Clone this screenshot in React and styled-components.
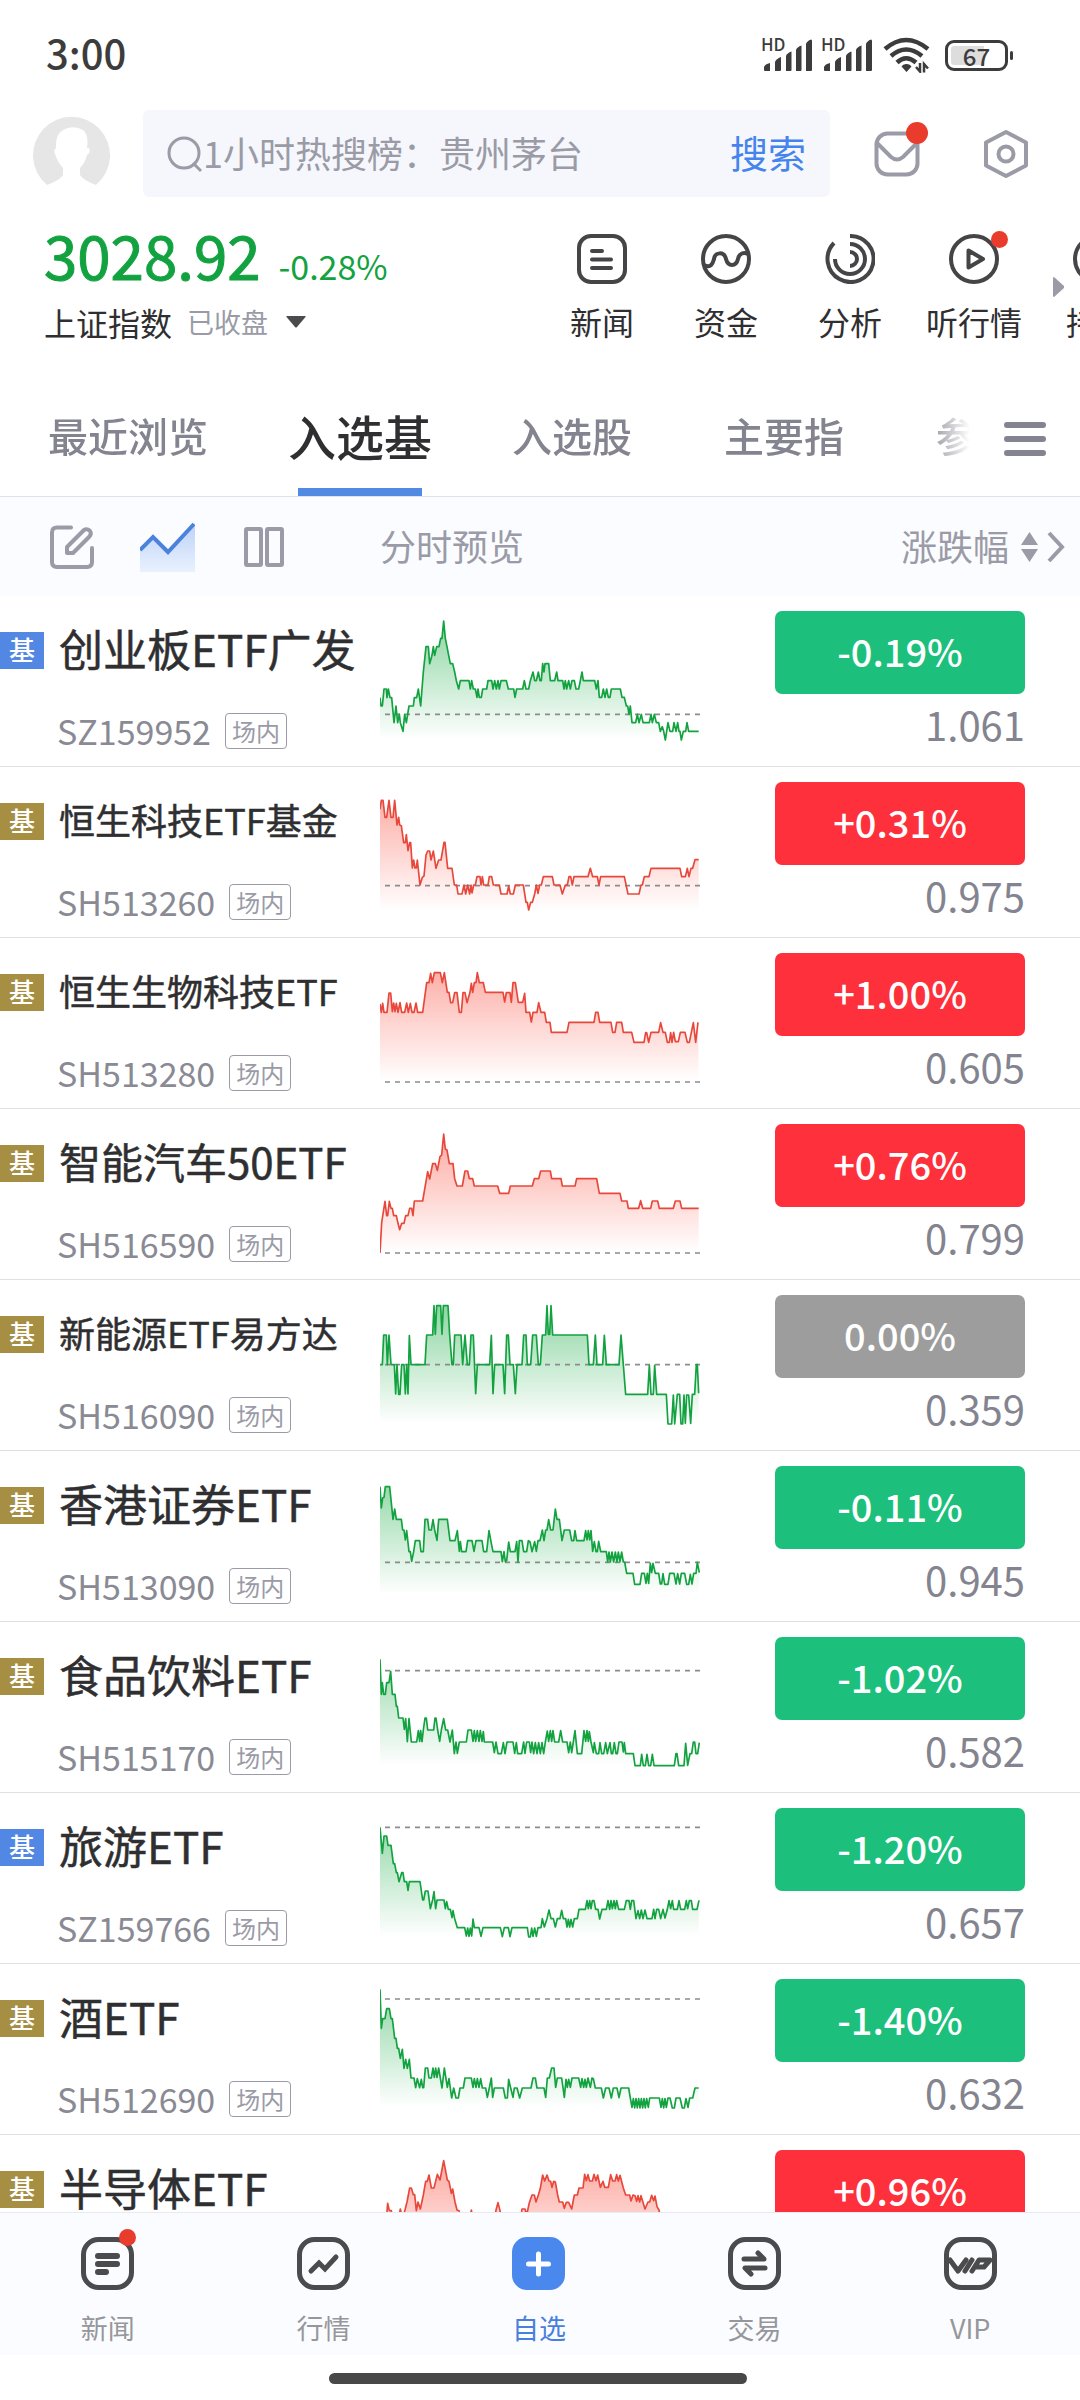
import React from "react";
import styled, { createGlobalStyle, css } from "styled-components";

const GlobalStyle = createGlobalStyle`
  * { box-sizing: border-box; }
  body {
    margin: 0;
    background: #ffffff;
    color: #2f2f31;
    font-family: "Noto Sans CJK SC", "Noto Sans", sans-serif;
  }
  button, input {
    font: inherit;
    color: inherit;
    border: 0;
    margin: 0;
    padding: 0;
    background: none;
    border-radius: 0;
    outline: 0;
  }
  button { cursor: pointer; }
  ul { list-style: none; margin: 0; padding: 0; }
  svg { display: block; flex: none; }
`;

const GREEN = "#12a240";
const RED = "#e8483b";
const MUTED = "#9a9ba6";

const Screen = styled.div`
  height: 100vh;
  display: flex;
  flex-direction: column;
  overflow: hidden;
`;

/* ---------- status bar ---------- */

const StatusBar = styled.div`
  flex: none;
  height: 110px;
  padding: 0 65px 0 46px;
  display: flex;
  align-items: center;
  justify-content: space-between;
  color: #3c3c3c;
`;

const Clock = styled.time`
  padding-bottom: 6px;
  font-size: 40px;
  line-height: 48px;
  font-weight: 500;
`;

const StatusIcons = styled.div`
  display: flex;
  align-items: center;
  gap: 10px;
`;

const Signal = styled.div`
  display: flex;
  align-items: flex-start;
  width: 50px;
  height: 34px;
  position: relative;
`;

const HdMark = styled.span`
  position: absolute;
  left: -1px;
  top: -1px;
  font-size: 17px;
  line-height: 14px;
  font-weight: 500;
`;

const Battery = styled.div`
  position: relative;
  width: 63px;
  height: 31px;
  margin: 0 7px 0 4px;
  border: 3px solid #3c3c3c;
  border-radius: 9px;
  font-size: 24px;
  line-height: 19px;
  font-weight: 500;
  text-align: center;
  background: linear-gradient(90deg, #dddddd 64%, #ffffff 64%) content-box;
  padding: 3px;
  display: flex;
  align-items: center;
  justify-content: center;

  &::after {
    content: "";
    position: absolute;
    right: -8px;
    top: 8px;
    width: 3px;
    height: 9px;
    border-radius: 2px;
    background: #3c3c3c;
  }
`;

/* ---------- header ---------- */

const Header = styled.header`
  flex: none;
  height: 87px;
  padding: 0 50px 0 33px;
  display: flex;
  align-items: center;
`;

const RoundButton = styled.button`
  width: 77px;
  height: 77px;
  margin-right: 33px;
`;

const SearchForm = styled.form`
  flex: 1;
  min-width: 0;
  height: 87px;
  margin-right: 43px;
  padding: 0 24px;
  border-radius: 6px;
  background: #f5f7fc;
  display: flex;
  align-items: center;
`;

const SearchInput = styled.input`
  flex: 1;
  min-width: 0;
  height: 54px;
  padding-bottom: 4px;
  font-size: 36px;
  &::placeholder { color: ${MUTED}; opacity: 1; }
`;

const SearchButton = styled.button`
  padding-bottom: 4px;
  font-size: 38px;
  line-height: 54px;
  color: #4484ec;
`;

const HeaderButton = styled.button`
  position: relative;
  width: 48px;
  height: 54px;
  display: grid;
  place-items: center;
  & + & { margin-left: 61px; }
`;

const Dot = styled.i`
  position: absolute;
  border-radius: 50%;
  background: #e93c2c;
  width: ${(p) => p.$size}px;
  height: ${(p) => p.$size}px;
  right: ${(p) => p.$right}px;
  top: ${(p) => p.$top}px;
`;

/* ---------- index summary ---------- */

const Summary = styled.section`
  flex: none;
  position: relative;
  height: 188px;
  padding-top: 22px;
  display: flex;
`;

const IndexBlock = styled.div`
  width: 50%;
  flex: none;
  padding-left: 44px;
`;

const IndexFigures = styled.div`
  display: flex;
  align-items: baseline;
  gap: 18px;
  height: 80px;
  line-height: 70px;
  color: ${GREEN};
`;

const IndexValue = styled.strong`
  font-size: 60px;
  font-weight: 400;
  -webkit-text-stroke: 1px ${GREEN};
`;

const IndexChange = styled.span`
  font-size: 34px;
`;

const IndexPicker = styled.button`
  display: flex;
  align-items: center;
  height: 46px;
  font-size: 32px;
  line-height: 46px;
`;

const MarketState = styled.span`
  margin: 0 18px 0 15px;
  font-size: 27px;
  color: ${MUTED};
`;

const Shortcuts = styled.nav`
  flex: 1;
  min-width: 0;
  display: flex;
  overflow: hidden;
`;

const Shortcut = styled.a`
  position: relative;
  flex: none;
  width: 124px;
  padding-top: 15px;
  display: flex;
  flex-direction: column;
  align-items: center;
  gap: 14px;
  color: inherit;
  text-decoration: none;
  white-space: nowrap;
  font-size: 32px;
  line-height: 46px;
`;

const MoreArrow = styled.svg`
  position: absolute;
  right: 16px;
  top: 80px;
`;

/* ---------- group tabs ---------- */

const TabBar = styled.div`
  flex: none;
  height: 112px;
  padding: 0 34px 0 2px;
  border-bottom: 1px solid #e1e2e6;
  display: flex;
  align-items: stretch;
`;

const TabList = styled.div`
  flex: 1;
  min-width: 0;
  display: flex;
  overflow: hidden;
  mask-image: linear-gradient(90deg, #000 calc(100% - 80px), transparent calc(100% - 34px));
`;

const Tab = styled.button`
  position: relative;
  flex: none;
  padding: 0 46px;
  height: 111px;
  white-space: nowrap;
  font-size: 40px;
  font-weight: 500;
  line-height: 100px;
  color: #83848f;
  display: flex;
  ${(p) =>
    p.$active &&
    css`
      padding: 0 34px;
      font-size: 48px;
      color: #2f2f31;
      &::after {
        content: "";
        position: absolute;
        left: 44px;
        right: 44px;
        bottom: 0;
        height: 8px;
        background: #5289e2;
      }
    `}
`;

const MenuButton = styled.button`
  width: 42px;
  margin-bottom: 4px;
  display: grid;
  place-items: center;
`;

/* ---------- fund table ---------- */

const ListArea = styled.main`
  flex: 1;
  min-height: 0;
  overflow: hidden;
`;

const Table = styled.table`
  width: 100%;
  table-layout: fixed;
  border-collapse: separate;
  border-spacing: 0;
`;

const HeadCell = styled.th`
  height: 99px;
  padding: 0;
  width: ${(p) => p.$width || "auto"};
  background: #fbfcff;
  font-size: 36px;
  line-height: 52px;
  font-weight: 400;
  color: ${MUTED};
  text-align: left;
`;

const HeadLabel = styled.span`
  display: block;
  padding-bottom: 4px;
`;

const Tools = styled.div`
  display: flex;
  align-items: center;
  padding-left: 50px;
  & > :nth-child(2) { margin: 0 49px 0 46px; }
`;

const SortButton = styled.button`
  width: 100%;
  padding-right: 15px;
  display: flex;
  align-items: center;
  justify-content: flex-end;
  gap: 10px;
`;

const Cell = styled.td`
  height: 171px;
  padding: 0;
  vertical-align: top;
  border-bottom: 1px solid #dfe0e3;
`;

const NameLine = styled.div`
  display: flex;
  align-items: center;
  gap: 15px;
  height: 54px;
  margin-top: 27px;
`;

const Badge = styled.span`
  flex: none;
  width: 44px;
  height: 37px;
  padding-left: 9px;
  font-size: 26px;
  line-height: 34px;
  font-weight: 500;
  color: #ffffff;
  background: ${(p) => (p.$market === "SZ" ? "#5288e4" : "#a68e42")};
`;

const FundName = styled.span`
  padding-bottom: 4px;
  white-space: nowrap;
  font-weight: 400;
  -webkit-text-stroke: 0.5px #2f2f31;
  line-height: 54px;
  font-size: ${(p) => p.$size}px;
`;

const CodeLine = styled.div`
  display: flex;
  align-items: center;
  gap: 14px;
  height: 36px;
  margin-top: 36px;
  padding-left: 57px;
  font-size: 34px;
  line-height: 36px;
  color: #898a94;
`;

const Tag = styled.span`
  padding: 0 6px;
  height: 36px;
  border: 1px solid ${MUTED};
  border-radius: 4px;
  font-size: 24px;
  line-height: 33px;
  color: ${MUTED};
`;

const Quote = styled.div`
  margin: 15px 55px 0 0;
  display: flex;
  flex-direction: column;
  align-items: flex-end;
`;

const fills = { up: "#fd303b", down: "#1cc07c", flat: "#9d9d9d" };

const ChangeButton = styled.button`
  width: 250px;
  height: 83px;
  padding-bottom: 4px;
  border-radius: 7px;
  background: ${(p) => fills[p.$trend]};
  color: #ffffff;
  font-size: 38px;
  font-weight: 500;
  line-height: 76px;
`;

const Price = styled.span`
  margin-top: 10px;
  font-size: 40px;
  line-height: 40px;
  color: #83848f;
`;

/* ---------- bottom navigation ---------- */

const BottomNav = styled.nav`
  flex: none;
  height: 143px;
  padding-right: 2px;
  border-top: 1px solid #e9ebf0;
  background: #fbfcff;
  display: flex;
`;

const NavItem = styled.a`
  flex: 1;
  padding-top: 24px;
  display: flex;
  flex-direction: column;
  align-items: center;
  gap: 19px;
  text-decoration: none;
  font-size: 27px;
  line-height: 38px;
  color: ${(p) => (p.$active ? "#4a80dd" : "#96979b")};
`;

const IconHolder = styled.span`
  position: relative;
  display: block;
`;

const HomeArea = styled.div`
  flex: none;
  height: 45px;
  display: flex;
  justify-content: center;
  padding: 18px 5px 0 0;
`;

const HomeBar = styled.div`
  width: 418px;
  height: 11px;
  border-radius: 6px;
  background: #484848;
`;

/* ---------- icons ---------- */

const SignalIcon = () => (
  <Signal>
    <HdMark>HD</HdMark>
    <svg width="50" height="34" viewBox="0 0 50 34" fill="#3c3c3c">
      <path d="M2 29 Q3 26 8 25 V33 H3 Q2 33 2 32Z M13 24 Q14 21 19 19 V32 Q19 33 18 33 H13Z M24 18 Q25 15 29.500 13.500 V32 Q29.500 33 28.500 33 H24Z M34 12 Q35 9 39.500 7.500 V32 Q39.500 33 38.500 33 H34Z M44 6 Q45 3 49 1.500 Q50 1.500 50 3 V32 Q50 33 49 33 H44Z" />
    </svg>
  </Signal>
);

const WifiIcon = () => (
  <svg width="49" height="36" viewBox="0 0 49 36" fill="none" stroke="#3c3c3c" strokeWidth="4.500">
    <path d="M3 12 Q24 -6 46 12" />
    <path d="M9 19 Q24 6 40 19" />
    <path d="M15 25.500 Q24 17 34 25.500" />
    <path d="M24.500 27 a5 4 0 0 1 5 2.500 L24.500 35 L19.500 29.500 a5 4 0 0 1 5 -2.500z" fill="#3c3c3c" stroke="none" />
    <path d="M34 30 l4 4.500 V26 M42 35.500 V27 l4 4.500" strokeWidth="2.500" />
  </svg>
);

const AvatarIcon = () => (
  <svg width="77" height="77" viewBox="0 0 77 77">
    <path
      fill="#e6e6e7"
      d="M14 70 A38.500 38.500 0 1 1 63 70 Q50 65 47 60 V53 Q52 48 54 40 Q58 38 56 33 H54 Q56 20 50 15 Q43 11 35 13 Q22 16 23 33 Q20 35 22 39 Q25 48 30 53 V60 Q27 65 14 70Z"
    />
  </svg>
);

const SearchIcon = () => (
  <svg width="36" height="38" viewBox="0 0 36 38" fill="none" stroke={MUTED} strokeWidth="3">
    <circle cx="17" cy="18" r="15" />
    <path d="M26 28 L34 36" />
  </svg>
);

const MailIcon = () => (
  <svg width="46" height="46" viewBox="0 0 46 46" fill="none" stroke={MUTED} strokeWidth="4">
    <rect x="2.500" y="2.500" width="41" height="41" rx="11" />
    <path d="M3 12 L17 26 Q23 31 29 26 L43 12" />
  </svg>
);

const HexIcon = () => (
  <svg width="46" height="50" viewBox="0 0 46 50" fill="none" stroke={MUTED} strokeWidth="4">
    <path d="M23 3 L43 13.500 V36.500 L23 47 L3 36.500 V13.500Z" strokeLinejoin="round" />
    <circle cx="23" cy="25" r="7.500" />
  </svg>
);

const shortcutShapes = {
  news: (
    <>
      <rect x="2" y="2" width="46" height="46" rx="12" />
      <path d="M15 17 H25 M15 25.500 H34 M15 34 H34" strokeLinecap="round" strokeWidth="4" />
    </>
  ),
  fund: (
    <>
      <circle cx="25" cy="25" r="23" />
      <path d="M3 31 C11 35 12 28 13 25 C14 18 23 17 25 25 C27 33 35 33 37 25 C38 19 43 18 47 20" />
    </>
  ),
  analysis: (
    <path d="M25 2 A23 23 0 1 1 9 9 M25 10 A15 15 0 1 1 10 25 M25 18 A7 7 0 0 1 25 32" />
  ),
  listen: (
    <>
      <circle cx="25" cy="25" r="23" />
      <path d="M19.500 16.500 L34 25 L19.500 33.500Z" strokeLinejoin="round" />
    </>
  ),
  hold: <circle cx="25" cy="25" r="23" />,
};

const ShortcutIcon = ({ name }) => (
  <svg width="50" height="50" viewBox="0 0 50 50" fill="none" stroke="#454547" strokeWidth="4">
    {shortcutShapes[name]}
  </svg>
);

const navShapes = {
  news: <path d="M17 19 H36 M17 27 H36 M17 35 H25" strokeWidth="6" />,
  market: <path d="M14 34 L22 26 L28 32 L39 20" />,
  trade: (
    <path
      d="M16 22 H36 L30 16 M37 31 H17 L23 37"
      strokeLinejoin="round"
    />
  ),
  vip: <path d="M6 23 L14 34 L22 23 M28 23 L21 34 M28 34 L35 23 H46 L40 30 H33" strokeWidth="5" strokeLinejoin="round" />,
};

const NavIcon = ({ name }) =>
  name === "watch" ? (
    <svg width="53" height="53" viewBox="0 0 53 53">
      <rect width="53" height="53" rx="15" fill="#4a88ee" />
      <path d="M26.500 17 V37 M16.500 27 H36.500" stroke="#fff" strokeWidth="5" strokeLinecap="round" />
    </svg>
  ) : (
    <svg width="53" height="53" viewBox="0 0 53 53" fill="none" stroke="#4b4b4d" strokeLinecap="round" strokeWidth="5">
      <rect x="2.500" y="2.500" width="48" height="48" rx="15" />
      {navShapes[name]}
    </svg>
  );

const EditIcon = () => (
  <svg width="44" height="44" viewBox="0 0 44 44" fill="none" stroke={MUTED} strokeWidth="4" strokeLinecap="round" strokeLinejoin="round">
    <path d="M21 2.500 H7 Q2 2.500 2 7.500 V37 Q2 42 7 42 H37 Q42 42 42 37 V23" />
    <path d="M17 28 V22 L34 5 Q37 3 40 6 Q42 9 39 12 L23 28Z" />
  </svg>
);

const TrendIcon = () => (
  <svg width="55" height="51" viewBox="0 0 55 51" fill="none">
    <defs>
      <linearGradient id="trendFill" x1="0" y1="0" x2="0" y2="1">
        <stop offset="0" stopColor="#bcd2f7" />
        <stop offset="1" stopColor="#e9f1fe" />
      </linearGradient>
    </defs>
    <path d="M0 30 L13 16 L28 31 L55 2 V51 H0Z" fill="url(#trendFill)" />
    <path d="M0 29 L13 16 L28 31 L54 3" stroke="#4b82dc" strokeWidth="4" />
  </svg>
);

const ColumnsIcon = () => (
  <svg width="40" height="40" viewBox="0 0 40 40" fill="none" stroke={MUTED} strokeWidth="4">
    <rect x="2" y="2" width="15" height="36" rx="1" />
    <rect x="23" y="2" width="15" height="36" rx="1" />
  </svg>
);

/* ---------- data ---------- */

/* Chart traces are "x,y" pairs inside a 960 x 510 window whose top is given by `top`. */
const funds = [
  {
    name: "创业板ETF广发", size: 44, code: "SZ159952", change: "-0.19%", price: "1.061", trend: "down", top: 0, base: 355,
    line: "60,305 63,330 67,330 72,279 79,279 81,305 85,279 90,305 95,305 102,380 108,330 113,380 118,355 121,380 129,406 134,355 139,380 147,330 160,330 163,305 170,305 175,279 182,330 190,228 198,152 205,152 209,203 216,178 220,152 224,178 230,152 237,152 242,127 246,127 251,75 256,127 261,152 266,178 271,203 278,203 284,228 289,254 296,279 301,254 327,254 331,279 335,254 340,279 346,279 351,304 354,279 358,304 364,304 368,279 380,279 384,254 395,254 399,279 404,254 409,279 414,254 418,279 423,254 439,254 445,279 461,279 465,304 470,279 488,279 493,254 498,279 506,279 511,254 519,228 524,254 529,254 535,228 540,254 544,254 548,203 552,228 555,203 566,203 571,254 584,254 590,228 594,254 608,254 612,279 616,254 620,279 626,254 631,279 636,254 643,254 648,279 656,279 661,254 666,228 670,254 704,254 709,279 714,254 718,304 725,304 730,279 735,304 740,279 745,304 750,304 754,279 781,279 786,304 793,304 799,330 803,330 807,355 811,330 816,380 827,380 832,355 837,380 844,355 849,380 868,380 873,355 877,380 883,355 889,380 896,380 901,406 907,392 911,406 916,432 924,380 930,406 938,406 942,380 948,406 953,380 957,406 960,406 964,432 970,406 977,406 981,380 986,406 1016,406",
  },
  {
    name: "恒生科技ETF基金", size: 36, code: "SH513260", change: "+0.31%", price: "0.975", trend: "up", top: 21, base: 377,
    line: "60,147 64,121 69,121 75,172 80,172 87,121 93,172 99,172 104,121 111,195 116,172 119,195 124,197 131,248 136,248 139,224 144,272 149,248 152,248 157,324 161,300 165,324 169,324 172,300 180,375 187,352 192,348 198,285 203,273 209,273 213,300 220,273 228,325 236,300 243,300 252,247 255,247 263,325 276,325 283,375 290,375 294,402 306,402 312,375 317,402 323,375 329,402 333,375 336,399 341,375 346,375 351,350 360,350 363,375 367,350 371,375 384,375 388,350 395,350 400,375 418,375 423,402 441,402 446,378 451,402 460,402 466,375 490,375 498,427 502,427 506,450 512,427 517,427 524,402 529,375 534,400 539,375 544,375 550,350 577,350 582,375 600,375 607,402 616,375 622,375 627,350 632,350 637,375 642,350 684,350 691,325 698,350 712,350 717,375 722,350 793,350 804,402 837,402 843,375 847,375 853,350 867,350 873,325 960,325 965,350 976,350 982,325 987,350 993,325 998,325 1005,299 1016,299",
  },
  {
    name: "恒生生物科技ETF", size: 36, code: "SH513280", change: "+1.00%", price: "0.605", trend: "up", top: 534, base: 966,
    line: "60,732 64,757 68,730 72,757 81,757 87,699 92,699 97,755 101,729 105,755 109,730 114,757 120,728 125,757 134,757 140,729 145,757 151,730 156,757 162,757 168,729 173,757 188,757 200,668 207,668 212,640 217,668 223,638 241,638 247,668 253,638 262,697 267,697 272,728 278,728 284,698 291,698 298,757 304,757 309,698 315,698 321,728 330,697 334,670 338,697 343,668 348,668 352,638 358,668 370,668 376,697 429,697 434,726 439,698 450,698 454,727 459,668 466,668 475,727 488,727 494,700 498,757 509,757 514,786 519,757 531,757 536,728 543,757 554,757 559,787 570,787 574,817 621,817 627,787 702,787 707,757 714,757 719,787 753,787 758,817 765,817 770,787 785,787 790,817 815,817 822,847 852,847 857,818 860,818 866,847 873,817 896,817 902,788 909,817 916,817 922,847 928,847 932,818 936,847 941,817 946,845 955,845 961,817 975,817 982,847 988,847 1000,788 1007,847 1014,787",
  },
  {
    name: "智能汽车50ETF", size: 42, code: "SH516590", change: "+0.76%", price: "0.799", trend: "up", top: 27, base: 459,
    line: "60,459 65,368 75,304 80,347 83,347 88,304 93,325 97,325 101,347 109,347 114,370 119,389 125,370 132,370 137,347 144,347 149,325 155,325 159,347 163,303 188,303 203,215 209,237 218,191 226,191 232,211 240,170 245,165 251,102 256,147 261,150 268,191 279,191 284,236 291,258 307,258 315,213 323,213 328,236 338,236 343,258 413,258 419,280 446,280 451,258 517,258 523,236 536,236 542,213 571,213 575,236 603,236 607,258 645,258 650,236 710,236 718,280 780,280 785,303 801,303 805,325 836,325 842,302 848,325 872,325 877,303 893,303 898,325 940,325 946,303 960,303 965,325 1016,325",
  },
  {
    name: "新能源ETF易方达", size: 36, code: "SH516090", change: "0.00%", price: "0.359", trend: "flat", top: 540, base: 794,
    line: "60,794 67,794 71,705 79,705 82,794 87,705 93,794 103,794 107,882 111,794 116,883 120,883 125,794 132,794 136,882 140,794 144,882 148,707 153,794 195,794 200,705 218,705 222,617 226,703 230,617 242,617 246,703 250,617 264,617 269,705 276,794 280,794 284,705 303,705 308,794 315,705 322,794 328,794 333,705 340,705 347,881 352,794 389,794 394,706 399,881 404,794 429,794 434,881 440,705 445,705 450,794 460,794 466,881 471,794 486,794 491,705 498,705 502,794 512,794 518,705 529,705 535,794 541,794 547,705 557,705 561,617 565,703 569,703 573,617 578,705 682,705 687,794 700,794 706,705 711,794 728,794 733,706 739,794 777,794 783,705 797,883 863,883 868,796 873,883 880,883 884,796 890,883 919,883 924,972 935,972 940,885 944,972 952,883 959,883 963,972 968,972 972,885 976,970 980,885 986,885 992,970 997,883 1004,883 1009,794 1012,794 1016,880",
  },
  {
    name: "香港证券ETF", size: 44, code: "SH513090", change: "-0.11%", price: "0.945", trend: "down", top: 3, base: 337,
    line: "60,110 64,174 68,144 72,142 76,110 89,110 99,208 104,177 109,208 124,208 128,240 132,240 136,270 140,242 147,305 151,305 155,334 161,305 166,272 179,272 183,305 190,305 195,208 203,208 207,240 214,240 219,209 224,240 231,271 236,208 262,208 270,272 285,272 292,242 298,304 301,275 305,305 318,305 323,272 336,272 342,304 348,272 366,272 371,305 380,305 387,242 394,280 399,305 423,305 427,335 432,305 436,335 440,332 446,276 451,305 465,305 470,275 474,336 478,272 486,272 491,305 500,305 505,272 510,275 516,305 524,275 529,304 534,272 540,272 547,240 552,272 557,240 561,240 566,209 572,240 579,240 586,177 591,208 598,208 606,272 613,240 629,240 635,272 641,272 645,242 650,272 672,272 677,242 681,270 685,242 689,270 693,242 698,304 703,275 708,305 712,305 716,274 722,305 739,305 743,336 747,306 751,336 756,306 761,336 766,306 771,336 775,306 780,335 785,306 790,336 794,336 800,370 819,370 824,403 840,403 845,370 853,370 858,400 862,370 866,400 871,340 875,368 879,340 886,370 896,370 901,402 905,402 909,371 914,403 924,403 929,370 942,370 948,402 953,371 959,402 964,370 974,370 980,403 986,403 991,373 996,402 1001,370 1008,370 1012,337 1018,368",
  },
  {
    name: "食品饮料ETF", size: 44, code: "SH515170", change: "-1.02%", price: "0.582", trend: "down", top: 516, base: 662,
    line: "60,628 64,733 67,698 71,733 76,733 80,698 87,698 92,664 97,733 105,733 109,769 112,769 116,804 129,804 133,838 137,806 142,875 147,806 154,876 170,876 175,842 179,874 182,842 186,875 190,840 195,804 199,804 203,840 221,840 225,804 228,804 233,840 239,874 244,840 251,806 257,840 263,840 270,876 277,840 283,911 288,876 292,910 298,876 319,876 324,840 334,840 339,874 343,842 347,874 352,842 357,874 361,842 366,874 370,845 373,876 398,876 403,908 408,876 414,911 424,911 430,878 435,911 441,876 459,876 464,910 469,878 473,911 485,911 491,876 495,910 500,876 508,876 512,908 516,876 521,911 526,878 531,911 536,878 541,911 546,878 551,911 556,876 562,843 566,874 571,842 575,874 579,842 584,876 596,876 602,842 608,876 621,876 626,908 631,876 635,908 640,876 645,842 652,911 665,911 672,842 677,874 681,842 685,874 688,845 693,876 700,908 703,878 709,911 716,911 720,878 725,911 731,911 737,878 742,911 750,878 754,911 758,911 763,878 768,911 772,911 777,876 786,876 790,906 793,878 797,911 820,911 825,947 841,947 845,913 850,947 856,947 861,913 866,947 872,947 877,913 882,947 943,947 948,911 951,911 956,947 972,947 977,880 983,946 990,911 995,911 1000,876 1004,876 1008,911 1013,911 1018,878",
  },
  {
    name: "旅游ETF", size: 44, code: "SZ159766", change: "-1.20%", price: "0.657", trend: "down", top: 9, base: 112,
    line: "60,112 67,190 72,138 80,138 84,166 93,166 100,221 104,221 109,248 112,248 117,275 125,248 129,248 133,275 140,275 144,301 148,275 180,275 188,330 191,330 196,303 204,303 211,356 218,329 222,305 227,356 231,330 252,330 256,356 260,335 265,358 271,358 276,383 279,362 284,386 292,413 314,413 319,438 323,414 327,439 331,414 335,438 339,387 343,413 357,413 363,439 369,413 421,413 427,440 433,413 445,413 450,440 456,413 502,413 506,441 511,441 515,414 519,439 524,414 529,439 534,413 543,413 547,386 553,411 561,386 567,360 573,386 580,386 586,411 592,386 600,386 605,361 610,386 617,386 621,411 625,388 629,411 633,388 638,411 643,386 652,386 657,358 676,358 681,332 685,356 689,332 693,356 697,332 702,332 707,358 714,358 719,387 726,358 739,358 744,332 749,358 753,332 757,356 762,332 766,356 770,332 776,358 793,358 799,332 807,332 811,358 815,332 821,332 828,386 834,362 839,386 844,360 849,386 855,360 861,386 876,386 881,358 885,386 890,358 896,358 902,386 909,358 915,384 922,358 927,332 932,356 937,332 941,358 952,358 957,332 962,358 974,358 979,332 983,356 988,332 994,332 998,358 1011,358 1017,331",
  },
  {
    name: "酒ETF", size: 44, code: "SH512690", change: "-1.40%", price: "0.632", trend: "down", top: 522, base: 627,
    line: "60,598 64,715 68,686 75,686 80,656 88,656 93,686 97,686 104,745 108,745 112,775 116,775 121,805 127,778 132,835 137,808 142,835 148,808 153,864 162,864 167,893 172,866 179,893 184,868 188,893 191,893 196,834 203,834 207,864 214,864 219,834 223,862 227,834 231,862 236,834 246,894 253,834 262,892 267,866 275,924 281,894 288,924 295,924 300,894 310,894 315,864 334,864 339,892 343,866 348,892 352,866 357,892 362,866 367,894 377,894 382,922 388,894 394,864 398,922 403,894 430,894 436,924 442,924 446,868 452,894 459,922 463,894 471,894 479,924 487,894 513,894 519,864 526,864 531,894 552,894 557,922 562,864 568,864 575,834 582,834 587,892 592,864 605,864 613,922 618,868 622,892 626,868 631,892 636,864 656,864 662,892 666,866 671,892 675,868 679,892 684,864 691,892 696,864 700,866 706,894 724,894 730,924 737,894 747,894 754,924 760,894 771,894 777,923 783,894 806,894 811,924 816,952 820,926 824,954 828,926 832,954 836,926 840,954 844,926 848,954 852,926 856,954 860,926 865,952 869,924 898,924 903,952 907,926 911,954 915,926 919,952 924,924 930,924 937,954 943,954 948,924 960,924 967,954 973,954 978,926 984,952 989,924 998,924 1005,894 1016,894",
  },
  {
    name: "半导体ETF", size: 44, code: "SH512480", change: "+0.96%", price: "0.841", trend: "up", top: 1035, base: 1460,
    line: "60,1340 78,1300 83,1240 88,1262 94,1262 98,1290 115,1290 121,1257 127,1285 135,1260 141,1236 149,1194 154,1194 160,1214 164,1214 169,1262 174,1236 181,1257 190,1215 197,1174 202,1174 207,1155 214,1194 222,1194 232,1153 240,1170 251,1112 262,1170 267,1174 274,1210 278,1197 285,1236 291,1260 297,1262 303,1300 328,1300 334,1260 341,1300 402,1300 408,1260 414,1238 420,1262 427,1300 480,1300 486,1257 495,1257 500,1275 508,1238 516,1215 523,1215 528,1236 535,1215 541,1195 548,1155 554,1173 561,1155 567,1173 572,1174 576,1192 581,1174 586,1176 593,1215 598,1236 608,1236 613,1255 619,1237 626,1237 635,1257 643,1215 652,1215 657,1194 669,1194 674,1153 679,1172 684,1154 689,1173 697,1173 702,1153 708,1172 713,1155 721,1192 729,1174 734,1192 745,1192 752,1154 758,1173 765,1173 770,1154 775,1173 780,1156 790,1194 797,1215 809,1215 813,1233 819,1215 825,1217 830,1234 834,1217 839,1236 843,1217 855,1257 864,1236 869,1236 875,1216 881,1232 885,1218 891,1250 897,1260 910,1330 1016,1330",
  },
];

function Sparkline({ line, base, top, trend, id }) {
  const color = trend === "up" ? RED : GREEN;
  const glow = trend === "up" ? "#fb6d60" : "#3fb963";
  return (
    <svg width="320" height="170" viewBox={`60 ${top} 960 510`} fill="none" aria-hidden="true">
      <defs>
        <linearGradient id={id} gradientUnits="userSpaceOnUse" x1="0" x2="0" y1={top + 70} y2={top + 430}>
          <stop offset="0" stopColor={glow} stopOpacity="0.6" />
          <stop offset="1" stopColor={glow} stopOpacity="0" />
        </linearGradient>
      </defs>
      <polygon points={`60,${top + 430} ${line} 1016,${top + 430}`} fill={`url(#${id})`} />
      <line x1="75" x2="1020" y1={base} y2={base} stroke="#8c8c90" strokeWidth="5" strokeDasharray="15 15" />
      <polyline points={line} stroke={color} strokeWidth="5" strokeLinejoin="round" />
    </svg>
  );
}

const shortcuts = [
  { icon: "news", label: "新闻" },
  { icon: "fund", label: "资金" },
  { icon: "analysis", label: "分析" },
  { icon: "listen", label: "听行情", dot: true },
  { icon: "hold", label: "持仓" },
];

const tabs = ["最近浏览", "入选基", "入选股", "主要指", "参考"];

const navItems = [
  { icon: "news", label: "新闻", dot: true },
  { icon: "market", label: "行情" },
  { icon: "watch", label: "自选", active: true },
  { icon: "trade", label: "交易" },
  { icon: "vip", label: "VIP" },
];

export default function App() {
  return (
    <>
      <GlobalStyle />
      <Screen>
        <StatusBar>
          <Clock>3:00</Clock>
          <StatusIcons>
            <SignalIcon />
            <SignalIcon />
            <WifiIcon />
            <Battery>67</Battery>
          </StatusIcons>
        </StatusBar>

        <Header>
          <RoundButton aria-label="个人中心">
            <AvatarIcon />
          </RoundButton>
          <SearchForm role="search" onSubmit={(e) => e.preventDefault()}>
            <SearchIcon />
            <SearchInput type="text" aria-label="搜索" placeholder="1小时热搜榜：贵州茅台" />
            <SearchButton type="submit">搜索</SearchButton>
          </SearchForm>
          <HeaderButton aria-label="消息">
            <MailIcon />
            <Dot $size={22} $right={-7} $top={-5} />
          </HeaderButton>
          <HeaderButton aria-label="设置">
            <HexIcon />
          </HeaderButton>
        </Header>

        <Summary>
          <IndexBlock>
            <IndexFigures>
              <IndexValue>3028.92</IndexValue>
              <IndexChange>-0.28%</IndexChange>
            </IndexFigures>
            <IndexPicker>
              上证指数
              <MarketState>已收盘</MarketState>
              <svg width="20" height="12" viewBox="0 0 20 12">
                <path d="M1 0 H19 Q20 0 19.500 1 L11 11 Q10 12 9 11 L0.500 1 Q0 0 1 0Z" fill="#4b4b4d" />
              </svg>
            </IndexPicker>
          </IndexBlock>
          <Shortcuts>
            {shortcuts.map((s) => (
              <Shortcut key={s.label} href="#">
                <ShortcutIcon name={s.icon} />
                {s.label}
                {s.dot && <Dot $size={17} $right={28} $top={12} />}
              </Shortcut>
            ))}
          </Shortcuts>
          <MoreArrow width="11" height="20" viewBox="0 0 11 20">
            <path d="M0 1 Q0 0 1 0 L11 9 V11 L1 20 Q0 20 0 19Z" fill={MUTED} />
          </MoreArrow>
        </Summary>

        <TabBar>
          <TabList role="tablist">
            {tabs.map((t) => (
              <Tab key={t} role="tab" aria-selected={t === "入选基"} $active={t === "入选基"}>
                {t}
              </Tab>
            ))}
          </TabList>
          <MenuButton aria-label="分组管理">
            <svg width="42" height="36" viewBox="0 0 42 36" stroke="#83848f" strokeWidth="6" strokeLinecap="round">
              <path d="M3 4 H39 M3 18 H39 M3 32 H39" />
            </svg>
          </MenuButton>
        </TabBar>

        <ListArea>
          <Table>
            <thead>
              <tr>
                <HeadCell scope="col" $width="380px">
                  <Tools>
                    <button aria-label="编辑"><EditIcon /></button>
                    <button aria-label="走势"><TrendIcon /></button>
                    <button aria-label="分栏"><ColumnsIcon /></button>
                  </Tools>
                </HeadCell>
                <HeadCell scope="col">
                  <HeadLabel>分时预览</HeadLabel>
                </HeadCell>
                <HeadCell scope="col" $width="305px">
                  <SortButton>
                    <HeadLabel>涨跌幅</HeadLabel>
                    <svg width="46" height="32" viewBox="0 0 46 32" fill={MUTED}>
                      <path d="M2 14 L10.500 1 L19 14Z M2 18 L10.500 31 L19 18Z" />
                      <path d="M30 2 L43 16 L30 30" fill="none" stroke={MUTED} strokeWidth="4" />
                    </svg>
                  </SortButton>
                </HeadCell>
              </tr>
            </thead>
            <tbody>
              {funds.map((f) => (
                <tr key={f.code}>
                  <Cell>
                    <NameLine>
                      <Badge $market={f.code.slice(0, 2)}>基</Badge>
                      <FundName $size={f.size}>{f.name}</FundName>
                    </NameLine>
                    <CodeLine>
                      {f.code}
                      <Tag>场内</Tag>
                    </CodeLine>
                  </Cell>
                  <Cell>
                    <Sparkline id={`fill-${f.code}`} line={f.line} base={f.base} top={f.top} trend={f.trend} />
                  </Cell>
                  <Cell>
                    <Quote>
                      <ChangeButton $trend={f.trend}>{f.change}</ChangeButton>
                      <Price>{f.price}</Price>
                    </Quote>
                  </Cell>
                </tr>
              ))}
            </tbody>
          </Table>
        </ListArea>

        <BottomNav>
          {navItems.map((n) => (
            <NavItem key={n.label} href="#" $active={n.active}>
              <IconHolder>
                <NavIcon name={n.icon} />
                {n.dot && <Dot $size={17} $right={-2} $top={-8} />}
              </IconHolder>
              {n.label}
            </NavItem>
          ))}
        </BottomNav>
        <HomeArea>
          <HomeBar />
        </HomeArea>
      </Screen>
    </>
  );
}
